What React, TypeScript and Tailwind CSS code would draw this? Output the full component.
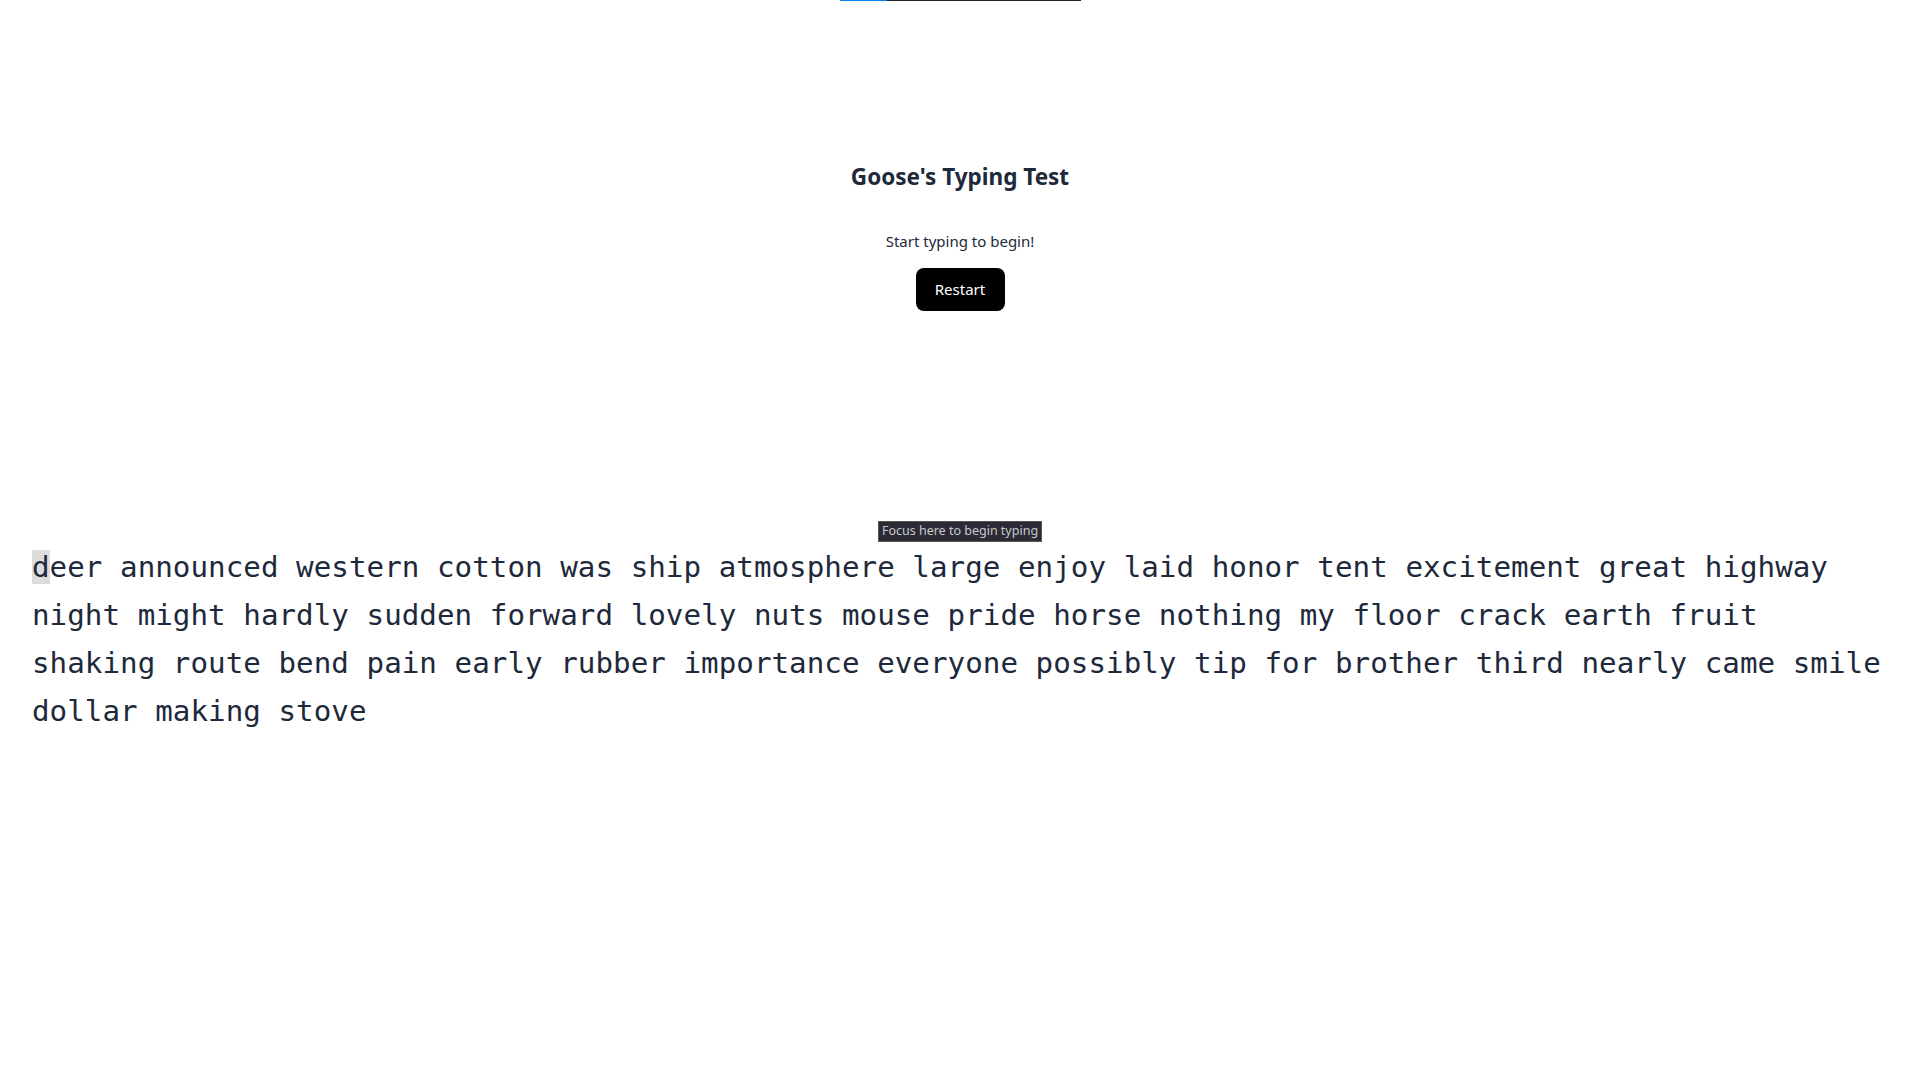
import React from "react";

const WORDS =
  "deer announced western cotton was ship atmosphere large enjoy laid honor tent excitement great highway night might hardly sudden forward lovely nuts mouse pride horse nothing my floor crack earth fruit shaking route bend pain early rubber importance everyone possibly tip for brother third nearly came smile dollar making stove";

export default function App() {
  const text = WORDS;
  return (
    <div className="min-h-screen bg-white text-[#1e293b] font-['Noto_Sans',sans-serif]">
      {/* progress */}
      <div className="mx-auto flex h-px w-[241px] bg-[#222]">
        <div className="h-px w-[47px] bg-[#0a84e8]" />
      </div>

      <div className="flex flex-col items-center">
        <h1 className="mt-[160px] text-[22.5px] leading-8 font-bold">Goose's Typing Test</h1>
        <p className="mt-[38px] text-[15px] leading-5">Start typing to begin!</p>
        <button
          type="button"
          className="mt-[17px] h-[43px] w-[89px] rounded-lg bg-black text-[15px] text-white"
        >
          Restart
        </button>
        <div className="mt-[210px] flex h-[21px] w-[164px] items-center justify-center border border-[#555] bg-[#2b2b36] text-[12.5px] text-[#c8c8c8]">
          Focus here to begin typing
        </div>
      </div>

      <div className="mt-px px-8 font-['DejaVu_Sans_Mono',monospace] text-[29.2px] tracking-[0.035px] leading-[48px] break-words">
        <span className="bg-[#dcdcdc]">{text[0]}</span>
        {text.slice(1)}
      </div>
    </div>
  );
}
